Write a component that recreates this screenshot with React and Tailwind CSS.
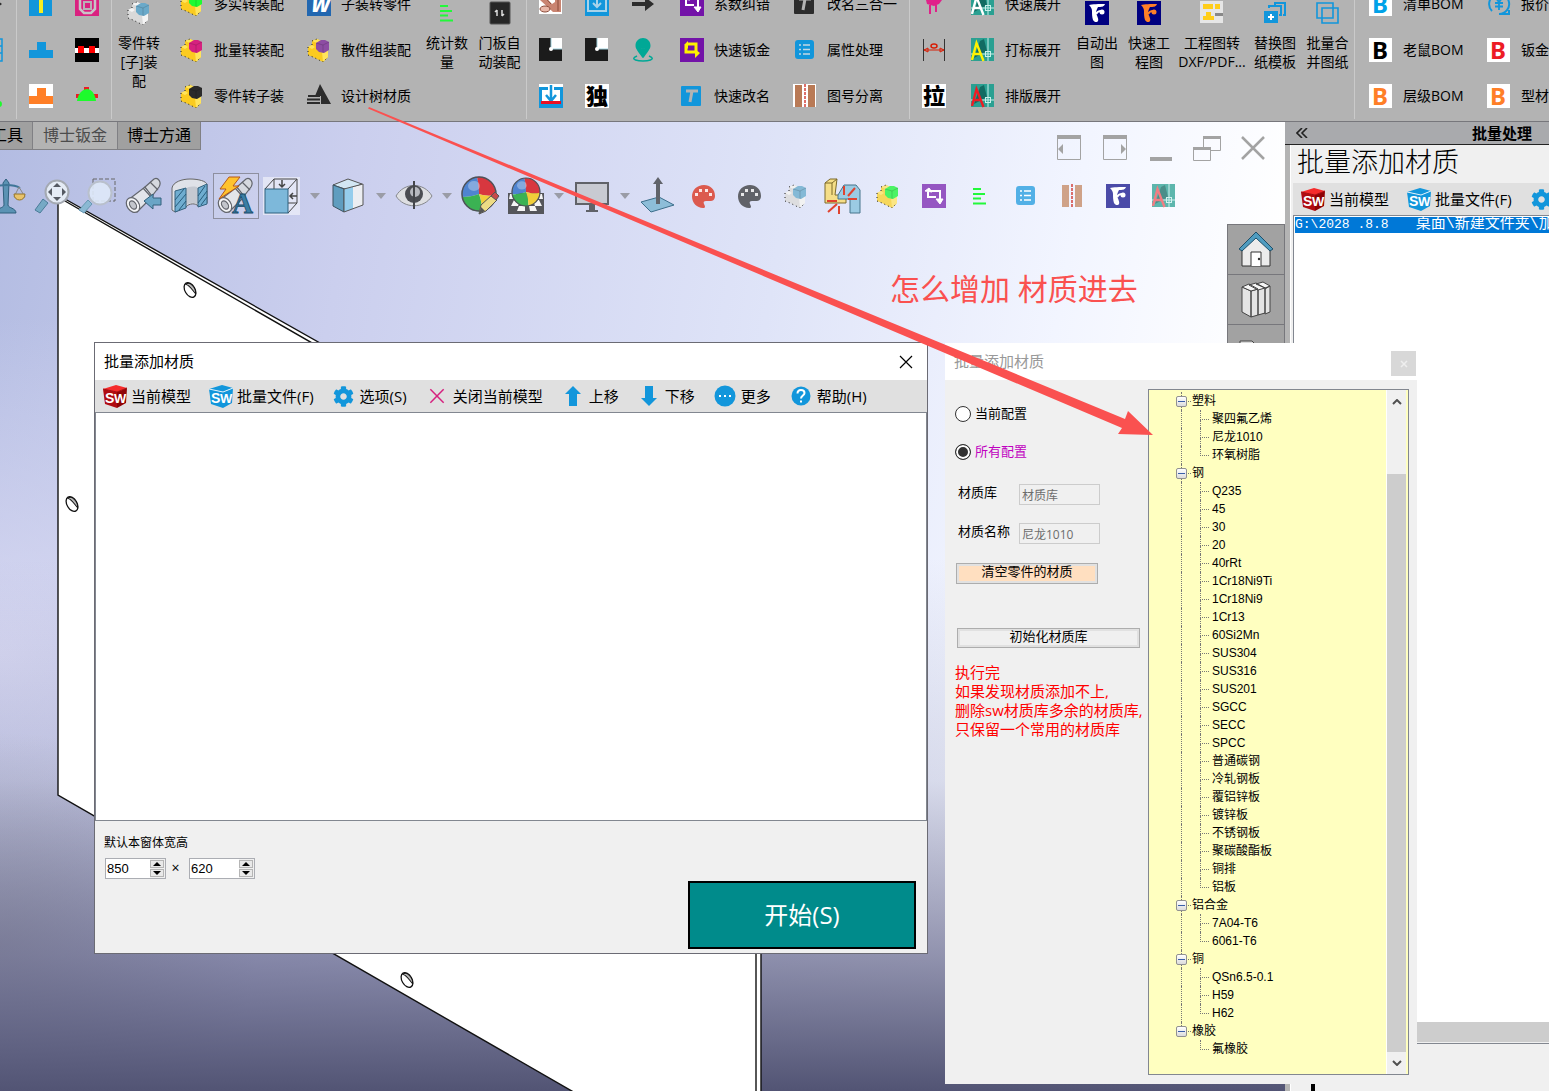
import React, { useState } from "react";
import { FaCog, FaMapMarkerAlt } from "react-icons/fa";

const TILE_FONT = '"Noto Sans CJK SC", sans-serif';

/* ---------- small icons, all on a 24 grid ---------- */

const Svg = ({ children, size = "size-6", box = "0 0 24 24" }) => (
  <svg viewBox={box} className={`${size} shrink-0`} fill="none" aria-hidden="true">
    {children}
  </svg>
);

const PartIcon = ({ body = "#fbcb20", side = "#ffe45c", top = "#1dfb32" }) => (
  <Svg>
    <path d="M1 9l4-2V3l5-2 5 2 6 9v7l-5 5-10-5-5-2z" fill={body} />
    <path d="M5 3l5-2 4 2-4 2zM1 9l4-2 3 2-3 2z" fill={side} />
    <path d="M15 14l6-2v7l-5 5z" fill={side} />
    <path d="M9 5l5-3h4l4 2v8l-5 3-5-1-3-3z" fill={top} />
    <path d="M9 5l7 2 6-3M16 7v8" stroke="#000" strokeOpacity=".15" />
    <path d="M1 9v8l5 2 10 5 5-5M5 7V3l5-2" stroke="#222" strokeDasharray="1 3" />
  </Svg>
);

const Tile = ({ bg, color, char, size = 22, italic }) => (
  <Svg>
    <rect width="24" height="24" fill={bg} />
    <text x="12" y="20" textAnchor="middle" fontSize={size} fontWeight="900" fontStyle={italic ? "italic" : "normal"} fill={color} fontFamily={TILE_FONT}>
      {char}
    </text>
  </Svg>
);

const BIcon = ({ color }) => (
  <Svg>
    <rect width="23" height="24" fill="#fff" />
    <text x="11" y="21" textAnchor="middle" fontSize="24" fontWeight="700" fill={color} fontFamily='"Noto Sans", sans-serif'>B</text>
  </Svg>
);

const FIcon = ({ bg = "#000080", color = "#fff" }) => (
  <Svg>
    <rect width="24" height="24" fill={bg} />
    <path d="M4 4c3-1 10-1 16-1-1 3-4 3-7 3-1 2-2 4-2 6 1 3 3 6 2 8s-4 1-5-1c-1-3-1-6-1-9 0-2-1-4-3-6z" fill={color} />
    <path d="M11 13c1-2 3-3 5-3" stroke={color} strokeWidth="2" />
    <circle cx="17" cy="11" r="2.500" fill={color} />
  </Svg>
);

const CadIcon = ({ color, faded }) => (
  <Svg>
    <g opacity={faded ? 0.75 : 1}>
      <rect width="23" height="23" fill="#2aa092" />
      <path d="M3 20L9 3l4-2 3 12z" fill="#126b62" />
      <path d="M17 0v23M0 16h23" stroke="#c8efea" strokeWidth="1" />
      <rect x="14.500" y="13.500" width="5" height="5" stroke="#c8efea" />
      <path d="M1 22L5.500 5l7 18M2 16h8" stroke={color} strokeWidth="2.400" />
    </g>
  </Svg>
);

const SwapIcon = ({ bg = "#7313a8", color = "#fff" }) => (
  <Svg>
    <rect width="24" height="24" fill={bg} />
    <path d="M6 8v5h8M8 7h10v9" stroke={color} strokeWidth="2" />
    <path d="M3 7l4-3 3 4zM14 15h7l-3 5z" fill={color} stroke={color} />
  </Svg>
);

const LoopIcon = () => (
  <Svg>
    <rect width="24" height="24" fill="#7313a8" />
    <path d="M7 6h9v7M6 8v6h10" stroke="#fff200" strokeWidth="3" />
    <path d="M4 7l4-4v8zM20 15l-5-4v9z" fill="#fff200" />
  </Svg>
);

const RenameIcon = ({ bg = "#1296db" }) => (
  <Svg>
    <rect x="1" y="2" width="20" height="20" rx="1" fill={bg} />
    <path d="M6 7h12M12 7l-2 11" stroke="#b3b3b3" strokeWidth="3" />
  </Svg>
);

const ListIcon = ({ bg = "#1296db", fg = "#c4d8e4" }) => (
  <Svg>
    <rect x="2" y="2" width="19" height="19" rx="3" fill={bg} />
    <path d="M6 7h2m2 0h7M6 11.500h2m2 0h7M6 16h2m2 0h7" stroke={fg} strokeWidth="1.500" />
  </Svg>
);

const SplitIcon = ({ light }) => (
  <Svg>
    {!light && <rect width="23" height="23" fill="#fff" />}
    <path d="M2 1h7v22H2zM15 1h7v22h-7z" fill={light ? "#cfa288" : "#b97a56"} />
    <path d="M12 0v24" stroke="#d4413c" strokeWidth="1.500" strokeDasharray="3 1" />
  </Svg>
);

const CountIcon = () => (
  <Svg>
    <path d="M5 5h8M5 10h12M5 14.500h8M5 19.500h13" stroke="#22f83a" strokeWidth="2" />
  </Svg>
);

const PaletteIcon = ({ color }) => (
  <Svg>
    <path d="M12 1C5 1 0 6 0 12.500 0 19 5 24 11 24c3 0 2-2 1-4s0-3 2-3h5c3 0 4-3 4-5C23 5 18 1 12 1z" fill={color} />
    <path d="M3 9h3v3H3zM7 5h3v3H7zM13 5h3v3h-3zM17 9h3v3h-3z" fill="#fff" fillOpacity=".85" />
  </Svg>
);

const CornerIcon = () => (
  <Svg>
    <rect width="23" height="23" fill="#1b1b1b" />
    <path d="M12 0h11v11H12z" fill="#fff" />
    <path d="M12 0v11h11" stroke="#9fd0dc" />
    <circle cx="12" cy="11" r="2" fill="#fff" />
  </Svg>
);

const InsertIcon = () => (
  <Svg>
    <rect width="24" height="24" fill="#1296db" />
    <path d="M8 5H3v14h18V5h-5M12 0v14M8 11l4 4 4-4" stroke="#a8d3ea" strokeWidth="2" />
  </Svg>
);

const DownloadIcon = () => (
  <Svg>
    <rect width="24" height="24" fill="#1296db" />
    <path d="M0 0h24v3H0zM3 6h18v14H3zM9 3h6v4H9z" fill="#fff" />
    <path d="M12 1v15M7 11l5 6 5-6" stroke="#1296db" strokeWidth="2.500" />
    <path d="M2 18.500h20" stroke="#e81123" strokeWidth="3" />
  </Svg>
);

const TeeIcon = ({ color, bg }) => (
  <Svg>
    {bg && <rect width="24" height="24" fill={bg} />}
    <path d="M8 4h9v8h7v8H0v-8h8z" fill={color} />
  </Svg>
);

const LampIcon = () => (
  <Svg>
    <path d="M9 3h5v3H9zM1 10h4v4H1zM19 10h4v4h-4z" fill="#ed1c24" />
    <path d="M2 17c1-8 6-12 10-12s8 4 9 12z" fill="#1dfb2c" />
  </Svg>
);

const BeamIcon = () => (
  <Svg>
    <rect width="24" height="24" fill="#000" />
    <path d="M0 10h24v5H0z" fill="#fff" />
    <path d="M3 8h6v7H3zM14 8h6v7h-6z" fill="#f00" />
  </Svg>
);

const TreeMatIcon = () => (
  <Svg>
    <path d="M13 0l11 20H14V12H8zM1 11h12v2H1zM0 14.500h13v2H0zM0 18h13v2H0z" fill="#2c2c2c" />
  </Svg>
);

const DoorIcon = () => (
  <Svg>
    <rect x="2" y="1" width="20" height="22" rx="1" fill="#262626" stroke="#555" />
    <path d="M9 9v6M9 9l-2 2M14 9v6M14 15l2-2" stroke="#ddd" strokeWidth="1.500" />
  </Svg>
);

const DimIcon = () => (
  <Svg>
    <path d="M1.500 1v22M22.500 1v22" stroke="#333" />
    <path d="M2 12h20M2 12l4-2v4zM22 12l-4-2v4z" stroke="#d81e06" />
    <ellipse cx="12" cy="8" rx="3" ry="2" stroke="#d81e06" strokeWidth="1.500" />
  </Svg>
);

const BoltIcon = () => (
  <Svg>
    <path d="M4 8l5-3 8 1 3 2-3 4-5 2-7-2z" fill="#e0218a" />
    <path d="M8 13v9M14 13v7" stroke="#e0218a" strokeWidth="2" />
  </Svg>
);

const DxfIcon = () => (
  <Svg>
    <rect x="0" y="0" width="23" height="22" fill="#e6e6e6" />
    <path d="M3 3h10v5H3zM15 3h5v5h-5zM6 11h5v4h3v4H3v-4h3z" fill="#ffce1a" />
    <path d="M15 13.500h8" stroke="#888" strokeWidth="3" />
  </Svg>
);

const ReplaceIcon = () => (
  <Svg>
    <path d="M1 10h14v12H1z" fill="#1296db" />
    <path d="M8 13v6M5 16h6" stroke="#fff" strokeWidth="2" />
    <path d="M6 7V5h12v9h-2M12 4V2h10v12h-2" stroke="#1296db" strokeWidth="2" />
  </Svg>
);

const MergeIcon = () => (
  <Svg>
    <path d="M1 2h16v15H1zM6 7h16v15H6z" stroke="#1296db" strokeWidth="1.600" />
  </Svg>
);

const QuoteIcon = () => (
  <Svg>
    <path d="M5 19A10 10 0 1 1 12 22h10v-4" stroke="#1296db" strokeWidth="2" />
    <path d="M8 5l4 5 4-5M12 10v8M8 11h8M8 14.500h8" stroke="#1296db" strokeWidth="1.800" />
  </Svg>
);

const PipeIcon = () => (
  <Svg>
    <rect width="23" height="22" fill="#fff" />
    <path d="M1 0l12 12 3-2V0h6v20h-8L1 8z" fill="#c98471" />
    <path d="M3 2l9 10M19 0v19" stroke="#8b4b3a" />
    <ellipse cx="6" cy="17" rx="5" ry="3" fill="#e9b7a8" stroke="#8b4b3a" />
  </Svg>
);

const ArrowRight = () => (
  <Svg>
    <path d="M1 10h13V5l9 7-9 7v-5H1z" fill="#2c2c2c" />
  </Svg>
);

const SlotIcon = () => (
  <Svg>
    <rect width="23" height="24" fill="#1296db" />
    <rect x="10" width="4" height="21" fill="#f7ee21" />
  </Svg>
);

const FrameIcon = () => (
  <Svg>
    <rect width="24" height="24" fill="#da2180" />
    <path d="M5 0v17l4 4h7l4-4V0" stroke="#c9c3c7" strokeWidth="2.500" />
    <rect x="8" y="9" width="9" height="9" fill="#b9b0b6" />
    <rect x="10" y="11" width="5" height="5" fill="#da2180" />
  </Svg>
);

const MeshIcon = () => (
  <Svg>
    <path d="M10 1h13v22H10zM10 8h13M10 15h13M17 1v22" stroke="#1296db" strokeWidth="1.500" />
  </Svg>
);

const GreenDot = () => (
  <Svg>
    <circle cx="20" cy="20" r="3" fill="#1dfb2c" />
  </Svg>
);

const PinIcon = () => (
  <span className="relative flex size-6 justify-center">
    <FaMapMarkerAlt className="size-5 text-[#00a896]" />
    <svg viewBox="0 0 24 24" className="absolute inset-0" fill="none">
      <circle cx="12" cy="7" r="4" fill="#00a896" />
      <path d="M6 18c-9 4 3 5 6 5s15-1 6-5" stroke="#00a896" strokeWidth="1.500" />
    </svg>
  </span>
);

const SwIcon = ({ red }) => (
  <Svg>
    <path d="M0 5l13-4 11 3-10 4z" fill={red ? "#f52b2b" : "#1296db"} />
    <path d="M0 5l14 3v16L2 20z" fill={red ? "#b00c11" : "#1296db"} />
    <path d="M14 8l10-4-1 15-9 5z" fill={red ? "#8f0306" : "#1296db"} />
    <path d="M0 5l14 3 10-4" stroke={red ? "#a80a0e" : "#dff1fb"} strokeWidth="1" />
    <text x="2" y="19" fontSize="14" fontWeight="700" fill="#fff" fontFamily='"Liberation Sans", sans-serif'>S</text>
    <text x="11" y="19" fontSize="13" fontWeight="700" fill="#fff" fontFamily='"Liberation Sans", sans-serif'>W</text>
  </Svg>
);

/* ---------- ribbon ---------- */

const RibbonRow = ({ icon, label }) => (
  <button type="button" className="flex h-[46px] items-center gap-[10px] whitespace-nowrap pl-[14px] text-sm">
    {icon}
    {label}
  </button>
);

const IconColumn = ({ icons, names }) => (
  <div className="mt-[-19px] flex w-[46px] flex-col">
    {icons.map((icon, i) => (
      <button type="button" key={i} aria-label={names[i]} className="flex h-[46px] items-center justify-center">
        {icon}
      </button>
    ))}
  </div>
);

const BigButton = ({ icon, lines, width = "w-[52px]" }) => (
  <button type="button" className={`flex flex-col items-center gap-2 self-start pt-px text-sm leading-[19px] ${width}`}>
    {icon}
    <span className="whitespace-nowrap">
      {lines.map((line) => (
        <span key={line} className="block">{line}</span>
      ))}
    </span>
  </button>
);

const Group = ({ children, className = "" }) => (
  <div className={`flex h-[119px] shrink-0 overflow-hidden border-r border-[#cacaca] ${className}`}>{children}</div>
);

const Rows = ({ items, width }) => (
  <div className={`mt-[-19px] flex flex-col ${width}`}>
    {items.map(([label, icon]) => (
      <RibbonRow key={label} label={label} icon={icon} />
    ))}
  </div>
);

const Ribbon = () => (
  <header className="flex h-[122px] shrink-0 overflow-hidden border-b border-[#77777c] bg-[#b3b3b3] text-black">
    <Group className="w-[17px]">
      <div className="mt-[-19px] ml-[-21px] flex flex-col">
        {[<ArrowRight key="a" />, <MeshIcon key="b" />, <GreenDot key="c" />].map((icon, i) => (
          <span key={i} className="flex h-[46px] items-center">{icon}</span>
        ))}
      </div>
    </Group>
    <Group className="w-[95px] pl-px">
      <IconColumn names={["槽", "凸台", "T形"]} icons={[<SlotIcon />, <TeeIcon color="#1296db" />, <TeeIcon color="#ff7f27" bg="#fff" />]} />
      <IconColumn names={["框", "梁", "灯"]} icons={[<FrameIcon />, <BeamIcon />, <LampIcon />]} />
    </Group>
    <Group>
      <BigButton width="w-[54px]" icon={<PartIcon body="#d9d9d9" side="#f4f4f4" top="#6aa9c9" />} lines={["零件转", "[子]装", "配"]} />
      <Rows
        width="w-[127px]"
        items={[
          ["多实转装配", <PartIcon />],
          ["批量转装配", <PartIcon top="#d6217f" />],
          ["零件转子装", <PartIcon top="#2b2b2b" />],
        ]}
      />
      <Rows
        width="w-[128px]"
        items={[
          ["子装转零件", <Tile bg="#2267b0" color="#fff" char="W" size={20} italic />],
          ["散件组装配", <PartIcon top="#8d4da3" />],
          ["设计树材质", <TreeMatIcon />],
        ]}
      />
      <BigButton icon={<CountIcon />} lines={["统计数", "量"]} />
      <BigButton width="w-[53px]" icon={<DoorIcon />} lines={["门板自", "动装配"]} />
    </Group>
    <Group className="pl-px">
      <IconColumn names={["管", "角", "导入"]} icons={[<PipeIcon />, <CornerIcon />, <DownloadIcon />]} />
      <IconColumn names={["插入", "切角", "独立"]} icons={[<InsertIcon />, <CornerIcon />, <Tile bg="#fff" color="#000" char="独" />]} />
      <IconColumn names={["移动", "定位", "空"]} icons={[<ArrowRight />, <PinIcon />, null]} />
      <Rows
        width="w-[113px]"
        items={[
          ["系数纠错", <SwapIcon />],
          ["快速钣金", <LoopIcon />],
          ["快速改名", <RenameIcon />],
        ]}
      />
      <Rows
        width="w-[130px]"
        items={[
          ["改名三合一", <RenameIcon bg="#2c2c2c" />],
          ["属性处理", <ListIcon />],
          ["图号分离", <SplitIcon />],
        ]}
      />
    </Group>
    <Group className="pl-px">
      <IconColumn names={["螺栓", "标注", "拉伸"]} icons={[<BoltIcon />, <DimIcon />, <Tile bg="#fff" color="#000" char="拉" />]} />
      <Rows
        width="w-[114px]"
        items={[
          ["快速展开", <CadIcon color="#fff" />],
          ["打标展开", <CadIcon color="#fff200" />],
          ["排版展开", <CadIcon color="#ed1c24" />],
        ]}
      />
      <BigButton icon={<FIcon />} lines={["自动出", "图"]} />
      <BigButton icon={<FIcon color="#ff7f27" />} lines={["快速工", "程图"]} />
      <BigButton width="w-[74px]" icon={<DxfIcon />} lines={["工程图转", "DXF/PDF..."]} />
      <BigButton icon={<ReplaceIcon />} lines={["替换图", "纸模板"]} />
      <BigButton width="w-[53px]" icon={<MergeIcon />} lines={["批量合", "并图纸"]} />
    </Group>
    <Group>
      <Rows
        width="w-[118px]"
        items={[
          ["清单BOM", <BIcon color="#00a2e8" />],
          ["老鼠BOM", <BIcon color="#000" />],
          ["层级BOM", <BIcon color="#ff7f27" />],
        ]}
      />
      <Rows
        width="w-[119px]"
        items={[
          ["报价", <QuoteIcon />],
          ["钣金", <BIcon color="#ed1c24" />],
          ["型材", <BIcon color="#ff7f27" />],
        ]}
      />
    </Group>
  </header>
);

/* ---------- viewport toolbar ---------- */

const Big = ({ children }) => <Svg size="size-10" box="0 0 40 40">{children}</Svg>;

const ScaleIcon = () => (
  <Big>
    <path d="M20 3l3 4-1 22c0 3 8 3 8 8H10c0-5 8-5 8-8L17 7z" fill="#5b93b4" stroke="#2f5f7d" />
    <path d="M8 12c4-4 20-4 26 0" stroke="#3f7697" strokeWidth="2" />
    <path d="M33 11l-5 10h11z" stroke="#888" />
    <path d="M28 18h11c0 8-11 8-11 0z" fill="#e9c36b" stroke="#93742c" />
  </Big>
);

const ZoomFitIcon = () => (
  <Big>
    <path d="M3 34l8-11 5 4-8 10z" fill="#76a9c5" stroke="#4a7c98" />
    <circle cx="25" cy="16" r="11.500" fill="#e4ebf5" stroke="#a4a9b2" strokeWidth="2" />
    <path d="M25 7l4 4h-8zM25 25l4-4h-8zM16 16l4-4v8zM34 16l-4-4v8z" fill="#555a63" />
  </Big>
);

const ZoomAreaIcon = () => (
  <Big>
    <path d="M15 3h22v22H15z" stroke="#666" strokeDasharray="4 2" />
    <path d="M1 34l9-10 4 4-8 9z" fill="#8ab9d3" stroke="#6698b3" />
    <circle cx="22" cy="17" r="11.500" fill="#dfe9f8" fillOpacity=".9" stroke="#b9c0cc" strokeWidth="2" />
  </Big>
);

const Scope = () => (
  <g stroke="#62656c" strokeWidth="1.200">
    <path d="M4 24L21 11l8 9-16 16z" fill="#e3e5ea" />
    <path d="M21 11l9-8c4-2 8 3 5 8l-7 9z" fill="#d6d9df" />
    <path d="M19 12l9 10M26 6l8 8" />
    <ellipse cx="9" cy="29" rx="6" ry="8" transform="rotate(-35 9 29)" fill="#f3f4f6" />
    <ellipse cx="9" cy="29" rx="3" ry="4.500" transform="rotate(-35 9 29)" fill="#c3c6cc" />
  </g>
);

const PrevViewIcon = () => (
  <Big>
    <Scope />
    <path d="M20 25l9-7v4h8v7h-8v4z" fill="#6aa5c6" stroke="#33617d" />
  </Big>
);

const SectionIcon = () => (
  <Big>
    <path d="M2 12C3 6 12 3 20 3s17 2 17 6v18l-9 3c-2-3-9-3-12 1L5 36l-3-2z" fill="#dfe2e8" stroke="#666" />
    <path d="M16 13c2-3 10-3 12-1v17c-3-3-9-3-12 1z" fill="#c5c9d1" />
    <path d="M5 15l11-3v20L5 36zM28 12l9-4v20l-9 3z" fill="#6fadd0" stroke="#32617e" />
    <path d="M5 24l9-11M5 31l11-13M9 34l7-9M28 20l7-10M28 27l9-12M31 29l6-8" stroke="#285c7b" />
  </Big>
);

const AnnotIcon = () => (
  <Big>
    <Scope />
    <path d="M13 1h11l-7 9h6L3 23l7-10H4z" fill="#ffc32e" stroke="#b4571a" />
    <text x="16" y="37" fontSize="29" fontWeight="700" fill="#3c7ea4" stroke="#174b69" strokeWidth=".8" fontFamily='"Liberation Serif", serif'>A</text>
  </Big>
);

const OrientIcon = () => (
  <Big>
    <rect x="1" y="1" width="37" height="38" fill="#fff" opacity=".5" />
    <path d="M3 13L12 3h23v24L26 37M12 3v10M35 3l-9 10M35 27h-9" stroke="#444" />
    <rect x="3" y="13" width="23" height="24" fill="#7db8da" stroke="#2e617f" />
    <path d="M20 4v7m-3-3l3 3 3-3M35 20h-7m3-3l-3 3 3 3" stroke="#444" strokeWidth="1.500" />
  </Big>
);

const CubeIcon = () => (
  <Big>
    <path d="M5 9l15-6 14 5-14 6z" fill="#d3e7f3" stroke="#555" />
    <path d="M5 9l11 4v23L5 30z" fill="#5f9dbf" stroke="#3c5361" />
    <path d="M16 13l9-2v22l-9 3z" fill="#95cdec" />
    <path d="M25 11l10-3v21l-10 4z" fill="#eceef2" />
    <path d="M16 13l19-5v21l-19 7z" stroke="#555" />
  </Big>
);

const EyeIcon = () => (
  <Big>
    <path d="M2 20C10 6 30 6 38 20 30 33 10 33 2 20z" fill="#dedfe2" stroke="#85878c" />
    <circle cx="20" cy="18" r="9" fill="#4b4d52" />
    <circle cx="21" cy="16" r="5" fill="#b7b9bf" />
    <path d="M20 5v28" stroke="#44464a" strokeWidth="2" />
  </Big>
);

const Ball = ({ cx = 19, cy = 18, r = 17 }) => (
  <g transform={`translate(${cx} ${cy}) scale(${r / 17})`}>
    <path d="M0 0C0-8-1-13-2-17A17 17 0 0 0-17 3c6 0 12-1 17-3z" fill="#4f84d0" />
    <path d="M0 0C0-8-1-13-2-17A17 17 0 0 1 17 1C11 2 6 2 0 0z" fill="#d8373f" />
    <path d="M0 0c-5 2-11 3-17 3A17 17 0 0 0 3 17C3 11 2 5 0 0z" fill="#3bb253" />
    <path d="M0 0c6 2 11 2 17 1A17 17 0 0 1 3 17C3 11 2 5 0 0z" fill="#f1ce3a" />
    <circle r="17" stroke="#4f5258" strokeWidth="1.500" />
    <ellipse cx="-5" cy="-8" rx="6" ry="5" fill="#fff" opacity=".3" />
  </g>
);

const AppearanceIcon = () => (
  <Big>
    <Ball />
    <path d="M19 38l2-9 11-10 5 5-11 11z" fill="#eddb85" stroke="#555" />
    <path d="M19 38l2-7 4 4z" fill="#555" />
    <path d="M31 20l4-4 4 4-3 4z" fill="#c74a4a" stroke="#555" />
  </Big>
);

const SceneIcon = () => (
  <Big>
    <path d="M2 17h36v21H2z" fill="#55565b" />
    <path d="M4 18h6l-1 5H3zM17 24h6v5h-6zM30 18h6l1 5h-6zM8 24h6l-2 6H5zM27 24h6l3 6h-7zM13 30h6v5h-8zM23 30h6l2 5h-7z" fill="#f5f5f5" />
    <Ball cx={20} cy={16} r={14} />
  </Big>
);

const MonitorIcon = () => (
  <Big>
    <rect x="4" y="7" width="32" height="21" fill="#c8cad2" stroke="#606268" strokeWidth="2" />
    <path d="M17 29h6v5h3v2H14v-2h3z" fill="#606268" />
  </Big>
);

const NormalIcon = () => (
  <Big>
    <path d="M3 26l18-5 15 8-23 7z" fill="#8dbdd8" stroke="#3c6e8b" />
    <path d="M20 28V8" stroke="#60636a" strokeWidth="4" />
    <path d="M15 8l5-7 5 7z" fill="#60636a" />
  </Big>
);

const ExplodeIcon = () => (
  <Big>
    <path d="M3 7l5-4h7l-2 16h11v8H3z" fill="#f5de87" stroke="#7d6a2b" />
    <path d="M3 7h7l5-4M10 7v12" stroke="#7d6a2b" />
    <path d="M16 19l6-10h12l4 5v23H28V23H16z" fill="#9bcbe3" stroke="#47748c" />
    <path d="M22 10v9M33 12l-7 8M26 23h9M5 25h10M15 28l-9 8M17 30v8" stroke="#e0432f" strokeWidth="2" />
  </Big>
);

const DropArrow = () => (
  <button type="button" aria-label="展开" className="flex w-5 items-center justify-center">
    <svg viewBox="0 0 10 6" className="h-[6px] w-[10px]"><path d="M0 0h10L5 6z" fill="#9a9ca6" /></svg>
  </button>
);

const viewTools = [
  ["评估", <ScaleIcon />],
  ["整屏显示", <ZoomFitIcon />],
  ["局部放大", <ZoomAreaIcon />],
  ["上一视图", <PrevViewIcon />],
  ["剖面视图", <SectionIcon />],
  ["动态注解", <AnnotIcon />, "active"],
  ["视图定向", <OrientIcon />, "menu"],
  ["显示样式", <CubeIcon />, "menu"],
  ["隐藏显示", <EyeIcon />, "menu"],
  ["编辑外观", <AppearanceIcon />],
  ["应用布景", <SceneIcon />, "menu"],
  ["视图设定", <MonitorIcon />, "menu"],
  ["正视于", <NormalIcon />],
  ["外观", <PaletteIcon color="#dc5a4e" />],
  ["颜色", <PaletteIcon color="#606268" />],
  ["零件", <PartIcon body="#dddddf" side="#f2f2f2" top="#84b9d6" />],
  ["爆炸", <ExplodeIcon />],
  ["装配", <PartIcon body="#f6d75c" side="#fbe684" top="#4cf365" />],
  ["纠错", <SwapIcon bg="#9556c2" />],
  ["统计", <CountIcon />],
  ["属性", <ListIcon bg="#52b0e6" fg="#fff" />],
  ["分离", <SplitIcon light />],
  ["出图", <FIcon bg="#4b4ba8" />],
  ["排版", <CadIcon color="#f0545a" faded />],
];

const grey = "#a3a3a3";

const windowControls = [
  ["左窗格", <path d="M.5 1.500h23v23H.5z" stroke={grey} />, <path d="M0 0h24v4H0zM1 14l5-5v10z" fill={grey} />],
  ["右窗格", <path d="M.5 1.500h23v23H.5z" stroke={grey} />, <path d="M0 0h24v4H0zM23 14l-5-5v10z" fill={grey} />],
  ["最小化", <path d="M1 22h22v4H1z" fill={grey} />],
  ["还原", <path d="M-1.500 12.500h17v13h-17zM8.500 12V2.500h17v13H15" stroke={grey} />, <path d="M-2 12h18v3H-2zM8 1h18v3H8z" fill={grey} />],
  ["关闭文档", <path d="M1 2l22 22M23 2L1 24" stroke={grey} strokeWidth="2.500" />],
];

const WindowControls = () => (
  <div className="flex pt-[13px] pr-[9px]">
    {windowControls.map(([name, a, b]) => (
      <button type="button" key={name} aria-label={name} className="flex w-[46px] justify-center">
        <svg viewBox="-2 0 28 26" className="h-[26px] w-7" fill="none">
          {a}
          {b}
        </svg>
      </button>
    ))}
  </div>
);

const Hole = ({ x, y }) => (
  <g transform={`translate(${x} ${y}) rotate(-30)`}>
    <ellipse rx="5" ry="8" fill="#fff" stroke="#111" strokeWidth="1.300" />
    <path d="M-1-7C2-6 2 2 3 6 6 2 5-8-1-7z" fill="#bbb" stroke="#111" />
  </g>
);

const Viewport = () => (
  <section className="relative flex min-w-0 flex-1 flex-col overflow-hidden bg-[linear-gradient(to_bottom,transparent_45%,rgba(120,122,160,0.2)_68%,rgba(104,105,140,0.7)_86%,rgb(82,84,116)_100%),radial-gradient(ellipse_20%_22%_at_0%_85%,rgba(140,140,140,0.6),transparent),radial-gradient(ellipse_35%_35%_at_0%_55%,rgba(220,220,244,0.85),transparent),linear-gradient(100deg,#b3bce2_0%,#cbcfee_25%,#dfe4f8_55%,#f2f5ff_75%,#ffffff_90%)]">
    {/* sheet part in the model space */}
    <svg className="absolute top-0 left-0 h-[969px] w-[1285px]" viewBox="0 122 1285 969" fill="none">
      <path d="M58 195L761 592V1200L58 795z" fill="#fff" stroke="#111" strokeWidth="1.400" />
      <path d="M58 197L756 598v620" stroke="#111" strokeWidth="1.400" />
      <Hole x={190} y={290} />
      <Hole x={72} y={504} />
      <Hole x={407} y={980} />
    </svg>

    <div className="relative flex items-start justify-between">
      <nav className="flex text-base leading-[27px]">
        <a href="#tools" className="flex w-[33px] justify-end border-r border-b border-[#808084] bg-[#a0a0a0] pr-[9px] whitespace-nowrap text-black">工具</a>
        <a href="#sheet" className="border-b border-[#808084] bg-[#b3b3b3] px-[10px] text-[#4c4c4c]">博士钣金</a>
        <a href="#tube" className="border-x border-b border-[#808084] bg-[#a0a0a0] px-[9px] text-black">博士方通</a>
      </nav>
      <WindowControls />
    </div>

    <div className="relative mt-3 -ml-[17px] flex h-[46px]">
      {viewTools.map(([name, icon, kind]) => (
        <React.Fragment key={name}>
          <button
            type="button"
            aria-label={name}
            className={`flex w-[46px] shrink-0 items-center justify-center ${kind === "active" ? "border border-[#8d8f9f] bg-white/10" : ""}`}
          >
            {icon}
          </button>
          {kind === "menu" && <DropArrow />}
        </React.Fragment>
      ))}
    </div>

    <aside className="relative mt-[5px] flex w-[58px] flex-col self-end border border-[#77777c] bg-[#a2a2a2]">
      <button type="button" aria-label="主页" className="flex h-[50px] items-center justify-center border-b border-[#77777c]">
        <Big>
          <path d="M6 18L20 6l14 12v18H6z" fill="#ececec" stroke="#333" />
          <path d="M15 36V22h10v14" fill="#fff" stroke="#333" />
          <path d="M3 19L20 2l17 17-3 2L20 8 6 21z" fill="#4f9cc0" stroke="#1d4f6a" />
          <circle cx="23" cy="29" r="1.200" fill="#333" />
        </Big>
      </button>
      <button type="button" aria-label="设计库" className="flex h-[50px] items-center justify-center border-b border-[#77777c]">
        <Big>
          <path d="M6 7l9 4v26l-9-5zM15 11l7-2v26l-7 2zM22 9l7-2v26l-7 2zM29 9l5-3v26l-5 2z" fill="#e4e4e4" stroke="#444" />
          <path d="M6 7l7-3 9 5-7 2zM13 5l7-2 9 5-7 2zM20 4l7-2 7 4-5 2z" fill="#f6f6f6" stroke="#444" />
        </Big>
      </button>
      <button type="button" aria-label="文件夹" className="flex h-[50px] items-center justify-center">
        <Big>
          <path d="M4 11h12l3 3h15v22H4z" fill="#dadada" stroke="#444" />
        </Big>
      </button>
    </aside>
  </section>
);

/* ---------- batch tool ---------- */

const ToolItem = ({ icon, label }) => (
  <button type="button" className="flex items-center gap-1 whitespace-nowrap">
    <span className="flex w-6 justify-center">{icon}</span>
    {label}
  </button>
);

const blue = "#1296db";

const batchTools = [
  ["当前模型", <SwIcon red />],
  ["批量文件(F)", <SwIcon />],
  ["选项(S)", <FaCog className="size-[21px] text-[#1296db]" />],
  ["关闭当前模型", <Svg size="size-5"><path d="M4 4l16 16M20 4L4 20" stroke="#d6217f" strokeWidth="1.800" /></Svg>],
  ["上移", <Svg><path d="M12 2l8 8h-4v12H8V10H4z" fill={blue} /></Svg>],
  ["下移", <Svg><path d="M12 22l8-8h-4V2H8v12H4z" fill={blue} /></Svg>],
  ["更多", <Svg><circle cx="12" cy="12" r="10.500" fill={blue} /><path d="M6 11h2v2H6zM11 11h2v2h-2zM16 11h2v2h-2z" fill="#fff" /></Svg>],
  ["帮助(H)", <Svg><circle cx="12" cy="12" r="9.500" fill={blue} /><path d="M8.500 9.500c0-5 7-4.500 7-.5 0 2.500-3.500 2.500-3.500 5.500M12 16.500v2" stroke="#fff" strokeWidth="2" /></Svg>],
];

const BatchToolbar = ({ tools }) => (
  <div className="flex h-8 shrink-0 gap-[18px] overflow-hidden bg-[#e0e0e0] pl-2 text-[15px] text-black">
    {tools.map(([label, icon]) => (
      <ToolItem key={label} label={label} icon={icon} />
    ))}
  </div>
);

const SidePanel = () => (
  <section className="flex w-[264px] shrink-0 flex-col bg-[#f0f0f0]">
    <div className="flex h-[23px] shrink-0 items-center justify-between border-b border-[#222] bg-[#a9aaad] pr-[17px] pl-[11px] text-[15px] font-bold text-black">
      <button type="button" aria-label="折叠">
        <svg viewBox="0 0 12 10" className="h-[10px] w-3" fill="none"><path d="M6 0L1 5l5 5M11 0L6 5l5 5" stroke="#222" strokeWidth="1.600" /></svg>
      </button>
      <h2>批量处理</h2>
    </div>
    <div className="flex min-h-0 flex-1 border-l-[5px] border-[#b4b4b4]">
      <div className="flex min-w-0 flex-1 flex-col border-l border-white pl-[2px]">
        <h1 className="h-[38px] shrink-0 pl-1 text-[27px] leading-[34px] font-light whitespace-nowrap text-black">批量添加材质</h1>
        <BatchToolbar tools={batchTools.slice(0, 3)} />
        <div className="min-h-0 flex-1 border-t border-l border-[#828790] bg-white pt-px pl-px">
          <div className="flex h-4 items-center gap-[27px] overflow-hidden bg-[#0078d7] font-['Liberation_Mono','Noto_Sans_CJK_SC',monospace] text-[13px] whitespace-nowrap text-white">
            <span>G:\2028 .8.8</span>
            <span className="text-[15px] leading-4">桌面\新建文件夹\加</span>
          </div>
        </div>
        <div className="mb-px h-5 shrink-0 bg-[#cdcdcd]" />
        <div className="flex h-12 shrink-0 items-end border-t border-[#828790] pl-[18px]">
          <span className="h-[7px] w-1 bg-black" />
        </div>
      </div>
    </div>
  </section>
);

const Spinner = ({ label, value, onChange, width }) => (
  <span className={`flex h-[21px] border border-[#abadb3] bg-white ${width}`}>
    <input
      aria-label={label}
      value={value}
      onChange={(e) => onChange(e.target.value)}
      className="w-0 flex-1 pl-px font-['Liberation_Sans',sans-serif] text-[13px] text-black outline-none"
    />
    <span className="flex w-[15px] flex-col gap-px bg-[#f0f0f0] py-px pr-px">
      <button type="button" aria-label="增加" onClick={() => onChange(Number(value) + 1)} className="flex flex-1 items-center justify-center border border-[#b5b5b5] bg-[#e9e9e9]">
        <svg viewBox="0 0 8 4" className="h-1 w-2"><path d="M0 4l4-4 4 4z" /></svg>
      </button>
      <button type="button" aria-label="减少" onClick={() => onChange(Number(value) - 1)} className="flex flex-1 items-center justify-center border border-[#b5b5b5] bg-[#e9e9e9]">
        <svg viewBox="0 0 8 4" className="h-1 w-2"><path d="M0 0l4 4 4-4z" /></svg>
      </button>
    </span>
  </span>
);

const BatchDialog = () => {
  const [w, setW] = useState(850);
  const [h, setH] = useState(620);
  return (
    <div role="dialog" aria-label="批量添加材质" className="absolute top-[342px] left-[94px] flex w-[834px] flex-col border border-[#6b6b74] bg-[#f0f0f0] text-black">
      <div className="flex h-[37px] items-center justify-between bg-white pr-[14px] pl-[9px] text-[15px]">
        <h2>批量添加材质</h2>
        <button type="button" aria-label="关闭">
          <svg viewBox="0 0 14 14" className="size-[14px]" fill="none"><path d="M1 1l12 12M13 1L1 13" stroke="#000" strokeWidth="1.200" /></svg>
        </button>
      </div>
      <BatchToolbar tools={batchTools} />
      <div className="h-[409px] border border-[#828790] bg-white" />
      <div className="flex flex-col px-[9px] pt-[13px] pb-1">
        <span className="text-xs leading-[18px]">默认本窗体宽高</span>
        <div className="mt-[6px] flex items-center">
          <Spinner label="宽" value={w} onChange={setW} width="ml-px w-[61px]" />
          <span className="w-[23px] pr-1 pb-px text-center text-sm leading-5">×</span>
          <Spinner label="高" value={h} onChange={setH} width="w-[66px]" />
        </div>
        <button type="button" className="mt-[2px] mr-[2px] h-[68px] w-[228px] self-end border-2 border-black bg-[#008b8b] text-2xl text-white">
          开始(S)
        </button>
      </div>
    </div>
  );
};

/* ---------- material dialog ---------- */

const materials = [
  { name: "塑料", items: ["聚四氟乙烯", "尼龙1010", "环氧树脂"] },
  {
    name: "钢",
    items: [
      "Q235", "45", "30", "20", "40rRt", "1Cr18Ni9Ti", "1Cr18Ni9", "1Cr13", "60Si2Mn",
      "SUS304", "SUS316", "SUS201", "SGCC", "SECC", "SPCC", "普通碳钢", "冷轧钢板",
      "覆铝锌板", "镀锌板", "不锈钢板", "聚碳酸酯板", "铜排", "铝板",
    ],
  },
  { name: "铝合金", items: ["7A04-T6", "6061-T6"] },
  { name: "铜", items: ["QSn6.5-0.1", "H59", "H62"] },
  { name: "橡胶", items: ["氟橡胶"] },
];

const MaterialTree = () => (
  <ul className="flex-1 pt-[2px] pb-4 pl-[27px] text-xs leading-[18px] whitespace-nowrap text-black">
    {materials.map((group, g) => {
      const lastGroup = g === materials.length - 1;
      return (
        <li key={group.name}>
          <div className="flex h-[18px] items-center">
            <span className="flex h-full w-[11px] flex-col items-center">
              <span className="h-1 border-l border-dotted border-[#777]" />
              <button type="button" aria-label={`折叠${group.name}`} className="flex size-[11px] items-center justify-center rounded-xs border border-[#919191] bg-linear-to-b from-white to-[#dcdcdc]">
                <span className="h-px w-[7px] bg-[#3a5fa8]" />
              </button>
              {!lastGroup && <span className="flex-1 border-l border-dotted border-[#777]" />}
            </span>
            <span className="mx-px w-[3px] border-t border-dotted border-[#777]" />
            {group.name}
          </div>
          <ul>
            {group.items.map((item, i) => (
              <li key={item} className="flex h-[18px]">
                <span className="flex w-6 pl-[5px]">
                  {!lastGroup && <span className="border-l border-dotted border-[#777]" />}
                </span>
                <span className="flex w-3 flex-col pr-[3px]">
                  <span className="h-[10px] border-b border-l border-dotted border-[#777]" />
                  {i < group.items.length - 1 && <span className="flex-1 border-l border-dotted border-[#777]" />}
                </span>
                {item}
              </li>
            ))}
          </ul>
        </li>
      );
    })}
  </ul>
);

const Radio = ({ label, checked, onChange, color }) => (
  <label className={`flex h-[18px] items-center gap-1 ${color}`}>
    <input
      type="radio"
      name="config"
      checked={checked}
      onChange={onChange}
      className="size-4 appearance-none rounded-full border border-[#333] bg-white checked:bg-[#333] checked:shadow-[inset_0_0_0_2px_white]"
    />
    {label}
  </label>
);

const Field = ({ id, label, value }) => (
  <div className="flex h-[21px] items-center">
    <label htmlFor={id} className="w-[63px] pb-1 pl-[2px]">{label}</label>
    <input id={id} readOnly value={value} className="h-[21px] w-[81px] border border-[#ccc] bg-[#f0f0f0] px-[2px] text-xs text-[#6d6d6d] outline-none" />
  </div>
);

const MaterialDialog = () => {
  const [config, setConfig] = useState("all");
  return (
    <div role="dialog" aria-label="材质选择" className="absolute top-[343px] left-[945px] flex w-[472px] flex-col bg-[#f0f0f0] text-black">
      <div className="flex h-[37px] items-center justify-between bg-white pr-px pl-[9px] text-[15px] text-[#999]">
        <h2>批量添加材质</h2>
        <button type="button" aria-label="关闭" className="mt-1 flex size-[25px] items-center justify-center bg-[#d8d8d8]">
          <svg viewBox="0 0 8 8" className="size-2" fill="none"><path d="M1 1l6 6M7 1L1 7" stroke="#eee" strokeWidth="1.500" /></svg>
        </button>
      </div>
      <div className="flex pt-[9px] pr-2 pb-[9px]">
        <div className="flex w-[203px] flex-col pt-4 pl-[10px] text-[13px]">
          <Radio label="当前配置" checked={config === "current"} onChange={() => setConfig("current")} color="text-black" />
          <span className="h-5" />
          <Radio label="所有配置" checked={config === "all"} onChange={() => setConfig("all")} color="text-[#c000c0]" />
          <div className="mt-[23px] ml-px flex flex-col gap-[18px]">
            <Field id="lib" label="材质库" value="材质库" />
            <Field id="mat" label="材质名称" value="尼龙1010" />
          </div>
          <button type="button" className="mt-[19px] ml-px flex h-[21px] w-[142px] items-center justify-center border border-[#adadad] bg-[#ffdfc0] pb-[3px] shadow-[inset_0_0_0_2px_#e1e1e1]">
            清空零件的材质
          </button>
          <button type="button" className="mt-11 ml-[2px] flex h-5 w-[183px] items-center justify-center border border-[#adadad] bg-[#f0f0f0] pb-[3px] shadow-[inset_0_0_0_2px_#e1e1e1]">
            初始化材质库
          </button>
          <p className="mt-[15px] text-[15px] leading-[19px] whitespace-nowrap text-[#f00]">
            执行完
            <br />
            如果发现材质添加不上,
            <br />
            删除sw材质库多余的材质库,
            <br />
            只保留一个常用的材质库
          </p>
        </div>
        <div className="relative flex flex-1 border border-[#828790] bg-[#ffffc0] font-['Liberation_Sans','Noto_Sans_CJK_SC',sans-serif]">
          <MaterialTree />
          <div className="mr-[2px] flex w-5 flex-col border-l border-white bg-[#f0f0f0]">
            <button type="button" aria-label="向上滚动" className="flex h-[23px] items-center justify-center">
              <svg viewBox="0 0 10 6" className="h-[6px] w-[10px]" fill="none"><path d="M1 5l4-4 4 4" stroke="#505050" strokeWidth="2" /></svg>
            </button>
            <span className="mt-[61px] flex-1 bg-[#cdcdcd]" />
            <button type="button" aria-label="向下滚动" className="flex h-[22px] items-center justify-center">
              <svg viewBox="0 0 10 6" className="h-[6px] w-[10px]" fill="none"><path d="M1 1l4 4 4-4" stroke="#505050" strokeWidth="2" /></svg>
            </button>
          </div>
        </div>
      </div>
    </div>
  );
};

const App = () => (
  <div className="relative flex h-screen w-full flex-col overflow-hidden bg-white font-['Open_Sans','Noto_Sans_CJK_SC',sans-serif]">
    <Ribbon />
    <main className="flex min-h-0 flex-1">
      <Viewport />
      <SidePanel />
    </main>

    <BatchDialog />
    <MaterialDialog />

    {/* red annotation above every window */}
    <svg className="pointer-events-none absolute top-0 left-0 h-[1091px] w-[1549px]" viewBox="0 0 1549 1091">
      <path d="M369 107L1125 419 1128 411 1153 435 1118 434 1122 428 368 108.500z" fill="#fa5150" />
    </svg>
    <p className="absolute top-[267px] left-[890px] text-[30px] leading-[44px] whitespace-nowrap text-[#fa5150]">怎么增加 材质进去</p>
  </div>
);

export default App;
